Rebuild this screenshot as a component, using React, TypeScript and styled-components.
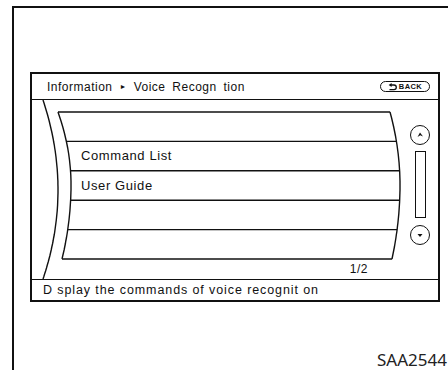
import React from 'react';
import styled, { createGlobalStyle } from 'styled-components';

const GlobalStyle = createGlobalStyle`
  html, body {
    margin: 0;
    padding: 0;
    background: #ffffff;
  }
  body {
    width: 448px;
    height: 370px;
    overflow: hidden;
    font-family: "Liberation Sans", Arial, sans-serif;
    color: #111111;
  }
`;

// list geometry (body-relative, px)
const LIST_W = 374;
const LIST_H = 179;
const ROW_TOP = 12;
const ROW_H = 29.4;
const ROW_COUNT = 5;

type Curve = { x: number; y: number; kTop: number; kBot: number };

const leftInner: Curve = { x: 39, y: 85, kTop: 13 / 5329, kBot: 9 / 5476 };
const rightEdge: Curve = { x: 368, y: 85, kTop: 10 / 5329, kBot: 8 / 5476 };
const leftOuter: Curve = { x: 26, y: 90, kTop: 15 / 8100, kBot: 15 / 7921 };

const xAt = (c: Curve, y: number) => {
  const d = y - c.y;
  return c.x - (d < 0 ? c.kTop : c.kBot) * d * d;
};

const curvePath = (c: Curve, y1: number, y2: number) => {
  const pts: string[] = [];
  for (let y = y1; y <= y2; y += 3) pts.push(`${xAt(c, y).toFixed(1)},${y}`);
  pts.push(`${xAt(c, y2).toFixed(1)},${y2}`);
  return 'M' + pts.join(' L');
};

const rows = ['', 'Command List', 'User Guide', '', ''];

const App: React.FC = () => {
  const lineYs = Array.from({ length: ROW_COUNT + 1 }, (_, i) => ROW_TOP + i * ROW_H);
  const bottom = ROW_TOP + ROW_COUNT * ROW_H;

  return (
    <>
      <GlobalStyle />
      <Frame>
        <Screen>
          <Header>
            <Crumb>
              Information <Arrow>►</Arrow> Voice Recogn tion
            </Crumb>
            <BackButton>
              <svg width="9" height="8" viewBox="0 0 9 8">
                <path d="M3 2 H6 A2.3 2.3 0 0 1 6 6.6 H1.5" fill="none" stroke="#111" strokeWidth="1.3" />
                <polygon points="0.6,2 3.6,0 3.6,4" fill="#111" />
              </svg>
              <span>BACK</span>
            </BackButton>
          </Header>
          <Body>
            <ListArea>
              <Drum width={LIST_W} height={LIST_H} viewBox={`0 0 ${LIST_W} ${LIST_H}`}>
                <g fill="none" stroke="#111" strokeWidth="1.4">
                  <path d={curvePath(leftOuter, 0, LIST_H)} />
                  <path d={curvePath(leftInner, ROW_TOP, bottom)} />
                  <path d={curvePath(rightEdge, ROW_TOP, bottom)} />
                  {lineYs.map((y) => (
                    <line key={y} x1={xAt(leftInner, y)} y1={y} x2={xAt(rightEdge, y)} y2={y} />
                  ))}
                </g>
              </Drum>
              <Rows>
                {rows.map((r, i) => (
                  <Row key={i}>{r}</Row>
                ))}
              </Rows>
              <PageNum>1/2</PageNum>
            </ListArea>
            <ScrollCol>
              <ScrollBtn>
                <svg width="10" height="10" viewBox="0 0 10 10">
                  <polygon points="5,2.5 8,6.5 5.3,5.3 2.5,7" fill="#111" />
                </svg>
              </ScrollBtn>
              <ScrollBar />
              <ScrollBtn $gap={7}>
                <svg width="10" height="10" viewBox="0 0 10 10">
                  <polygon points="2.5,4 7.5,4 5,7" fill="#111" />
                </svg>
              </ScrollBtn>
            </ScrollCol>
          </Body>
          <Footer>D splay the commands of voice recognit on</Footer>
        </Screen>
        <Caption>SAA2544</Caption>
      </Frame>
    </>
  );
};

const Frame = styled.div`
  box-sizing: border-box;
  margin: 6px 0 0 12px;
  width: 436px;
  height: 364px;
  border-top: 2px solid #111;
  border-left: 2px solid #111;
  padding: 64px 0 0 16px;
`;

const Screen = styled.div`
  box-sizing: border-box;
  width: 410px;
  height: 230px;
  border: 2px solid #111;
  display: flex;
  flex-direction: column;
`;

const Header = styled.div`
  box-sizing: border-box;
  flex: 0 0 26px;
  border-bottom: 1px solid #111;
  display: flex;
  align-items: center;
  justify-content: space-between;
  padding: 0 8px 0 15px;
`;

const Crumb = styled.div`
  font-size: 12px;
  letter-spacing: 0.5px;
  word-spacing: 3px;
  white-space: nowrap;
`;

const Arrow = styled.span`
  font-size: 7px;
  vertical-align: 2px;
`;

const BackButton = styled.div`
  box-sizing: border-box;
  width: 50px;
  height: 11px;
  border: 1.4px solid #111;
  border-radius: 6px;
  display: flex;
  align-items: center;
  justify-content: center;
  gap: 2px;
  font-size: 7.5px;
  font-weight: bold;
  letter-spacing: 0.4px;
  line-height: 1;
`;

const Body = styled.div`
  flex: 1;
  display: flex;
`;

const ListArea = styled.div`
  position: relative;
  width: ${LIST_W}px;
  height: ${LIST_H}px;
`;

const Drum = styled.svg`
  position: absolute;
  left: 0;
  top: 0;
`;

const Rows = styled.div`
  position: relative;
  padding-top: ${ROW_TOP}px;
  display: flex;
  flex-direction: column;
`;

const Row = styled.div`
  height: ${ROW_H}px;
  line-height: ${ROW_H}px;
  padding-left: 49px;
  font-size: 13px;
  letter-spacing: 0.6px;
`;

const PageNum = styled.div`
  position: relative;
  height: 20px;
  line-height: 20px;
  text-align: right;
  padding-right: 38px;
  font-size: 12px;
  letter-spacing: 0.5px;
`;

const ScrollCol = styled.div`
  width: 32px;
  display: flex;
  flex-direction: column;
  align-items: center;
  padding-top: 25px;
  padding-right: 4px;
  box-sizing: border-box;
`;

const ScrollBtn = styled.div<{ $gap?: number }>`
  box-sizing: border-box;
  width: 20px;
  height: 20px;
  margin-top: ${(p) => p.$gap ?? 0}px;
  border: 1.4px solid #111;
  border-radius: 50%;
  display: flex;
  align-items: center;
  justify-content: center;
`;

const ScrollBar = styled.div`
  box-sizing: border-box;
  margin-top: 6px;
  width: 11px;
  height: 67px;
  border: 1.4px solid #111;
`;

const Footer = styled.div`
  box-sizing: border-box;
  flex: 0 0 21px;
  border-top: 1px solid #111;
  padding-left: 11px;
  font-size: 12.5px;
  letter-spacing: 0.9px;
  line-height: 21px;
  white-space: nowrap;
`;

const Caption = styled.div`
  margin-top: 48px;
  padding-right: 1px;
  text-align: right;
  font-family: "Noto Sans", "Open Sans", sans-serif;
  font-size: 17px;
  line-height: 20px;
  color: #222;
`;

export default App;
